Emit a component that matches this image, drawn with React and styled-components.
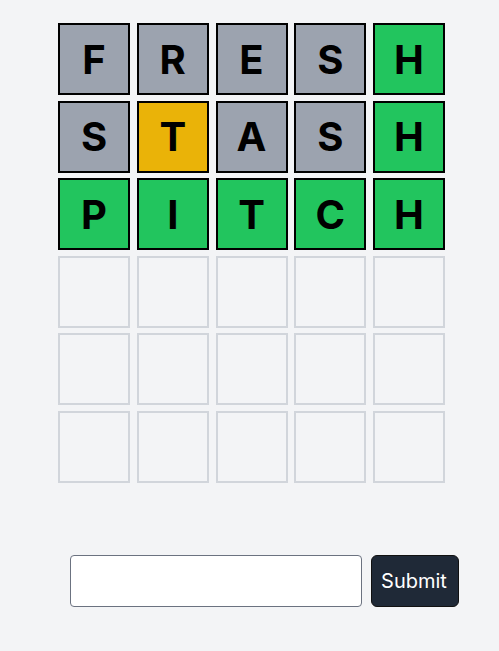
import React from "react";
import styled, { createGlobalStyle } from "styled-components";

const GlobalStyle = createGlobalStyle`
  html, body {
    margin: 0;
    padding: 0;
    background: #f3f4f6;
    font-family: Inter, "Noto Sans", sans-serif;
  }
`;

const rows = [
  [["F", "gray"], ["R", "gray"], ["E", "gray"], ["S", "gray"], ["H", "green"]],
  [["S", "gray"], ["T", "yellow"], ["A", "gray"], ["S", "gray"], ["H", "green"]],
  [["P", "green"], ["I", "green"], ["T", "green"], ["C", "green"], ["H", "green"]],
];

const colors = {
  gray: "#9ca3af",
  yellow: "#eab308",
  green: "#22c55e",
};

function App() {
  const board = [...rows];
  while (board.length < 6) board.push(Array(5).fill(["", "empty"]));

  return (
    <>
      <GlobalStyle />
      <Page>
        <Board>
          {board.map((row, r) =>
            row.map(([letter, state], c) => (
              <Tile key={`${r}-${c}`} $state={state}>
                {letter}
              </Tile>
            ))
          )}
        </Board>
        <Form onSubmit={(e) => e.preventDefault()}>
          <GuessInput type="text" />
          <SubmitButton type="submit">Submit</SubmitButton>
        </Form>
      </Page>
    </>
  );
}

const Page = styled.div`
  width: 499px;
  min-height: 651px;
  padding-top: 23px;
  box-sizing: border-box;
`;

const Board = styled.div`
  display: grid;
  grid-template-columns: repeat(5, 72px);
  grid-auto-rows: 72px;
  column-gap: 6.75px;
  row-gap: 5.5px;
  margin-left: 58px;
`;

const Tile = styled.div`
  box-sizing: border-box;
  display: flex;
  align-items: center;
  justify-content: center;
  border: 2px solid ${(p) => (p.$state === "empty" ? "#d1d5db" : "#000")};
  background: ${(p) => colors[p.$state] || "transparent"};
  font-size: 40px;
  font-weight: 700;
  color: #000;
`;

const Form = styled.form`
  display: flex;
  align-items: stretch;
  gap: 9px;
  margin: 72px 0 0 70px;
  height: 52px;
`;

const GuessInput = styled.input`
  width: 292px;
  box-sizing: border-box;
  border: 1px solid #6b7280;
  border-radius: 4px;
  background: #fff;
  font-size: 20px;
  padding: 0 12px;
  font-family: inherit;
  outline: none;
`;

const SubmitButton = styled.button`
  width: 88px;
  box-sizing: border-box;
  background: #1f2937;
  color: #fff;
  border: 1px solid #111;
  border-radius: 6px;
  font-family: inherit;
  font-size: 20px;
  padding: 0 8px 0 6px;
`;

export default App;
